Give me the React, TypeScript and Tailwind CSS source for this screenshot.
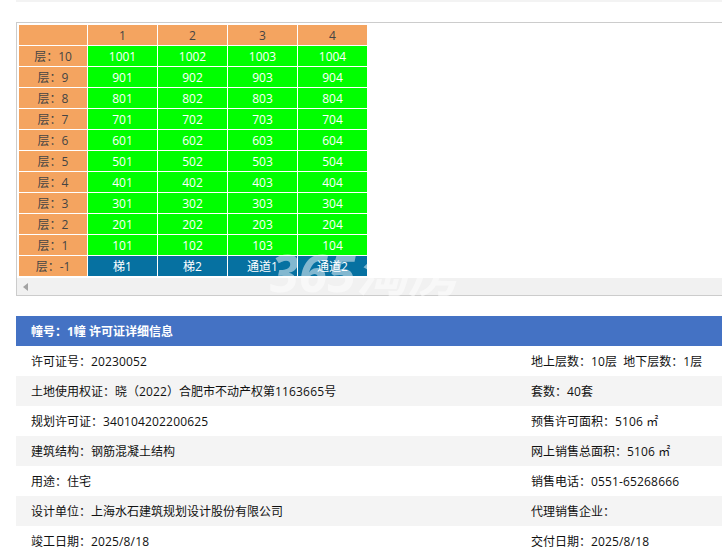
const floors = [10, 9, 8, 7, 6, 5, 4, 3, 2, 1];
const units = ["梯1", "梯2", "通道1", "通道2"];

const infoRows = [
  ["许可证号：20230052", "地上层数：10层  地下层数：1层"],
  ["土地使用权证：晓（2022）合肥市不动产权第1163665号", "套数：40套"],
  ["规划许可证：340104202200625", "预售许可面积：5106 ㎡"],
  ["建筑结构：钢筋混凝土结构", "网上销售总面积：5106 ㎡"],
  ["用途：住宅", "销售电话：0551-65268666"],
  ["设计单位：上海水石建筑规划设计股份有限公司", "代理销售企业："],
  ["竣工日期：2025/8/18", "交付日期：2025/8/18"],
];

const headCell = "h-5 p-0 pt-0.5 bg-[#f4a460] text-[#444] font-normal text-center";
const greenCell = "h-5 p-0 pt-0.5 bg-[#00ff00] text-white text-center";

// digits run a bit wider than the fallback font's, so space them out
function Value({ text }: { text: string }) {
  return (
    <>
      {text.split(/([\d/-]+)/).map((part, i) =>
        i % 2 === 1 ? (
          <span key={i} className="tracking-[0.15px]">
            {part}
          </span>
        ) : (
          part
        )
      )}
    </>
  );
}

export default function App() {
  return (
    <div
      className="h-[557px] w-[722px] overflow-hidden bg-white pl-4 text-xs text-[#111]"
      style={{ fontFamily: '"Open Sans", "Noto Sans CJK SC", sans-serif' }}
    >
      <div className="h-0.5 bg-[#f3f3f3]" />

      {/* Floor table */}
      <div className="relative mt-5 border border-r-0 border-[#ccc]">
        <div className="pt-px pl-px">
          <table className="border-separate border-spacing-[1px] leading-[18px]">
            <tbody>
              <tr>
                <th className={`${headCell} w-[68px]`} />
                {[1, 2, 3, 4].map((n) => (
                  <th key={n} className={`${headCell} w-[69px]`}>
                    {n}
                  </th>
                ))}
              </tr>
              {floors.map((f) => (
                <tr key={f}>
                  <td className={headCell}>层：{f}</td>
                  {[1, 2, 3, 4].map((n) => (
                    <td key={n} className={greenCell}>
                      {f * 100 + n}
                    </td>
                  ))}
                </tr>
              ))}
              <tr>
                <td className={headCell}>层：-1</td>
                {units.map((u) => (
                  <td key={u} className="h-5 bg-[#0671a1] p-0 pt-0.5 text-center text-white">
                    {u}
                  </td>
                ))}
              </tr>
            </tbody>
          </table>
        </div>

        {/* Scrollbar */}
        <div className="mt-px flex h-[17px] items-center bg-[#f1f1f1] pl-[6px]">
          <div className="h-0 w-0 border-y-4 border-r-[5px] border-y-transparent border-r-[#a3a3a3]" />
        </div>

        {/* Watermark */}
        <div className="absolute top-[219px] left-[253px] text-[52px] leading-[60px] font-bold whitespace-nowrap text-white/50 italic">
          365淘房
        </div>
      </div>

      {/* Permit details */}
      <div className="mt-5">
        <div className="flex h-[30px] items-center bg-[#4472c4] pt-0.5 pl-[15px] font-bold text-white">
          幢号：1幢 许可证详细信息
        </div>
        {infoRows.map(([left, right], i) => (
          <div
            key={left}
            className={`grid h-[30px] grid-cols-[515px_1fr] items-center pt-0.5 whitespace-pre ${
              i % 2 === 1 ? "bg-[#f4f4f4]" : "bg-white"
            }`}
          >
            <div className="pl-[15px]">
              <Value text={left} />
            </div>
            <div>
              <Value text={right} />
            </div>
          </div>
        ))}
      </div>
    </div>
  );
}
